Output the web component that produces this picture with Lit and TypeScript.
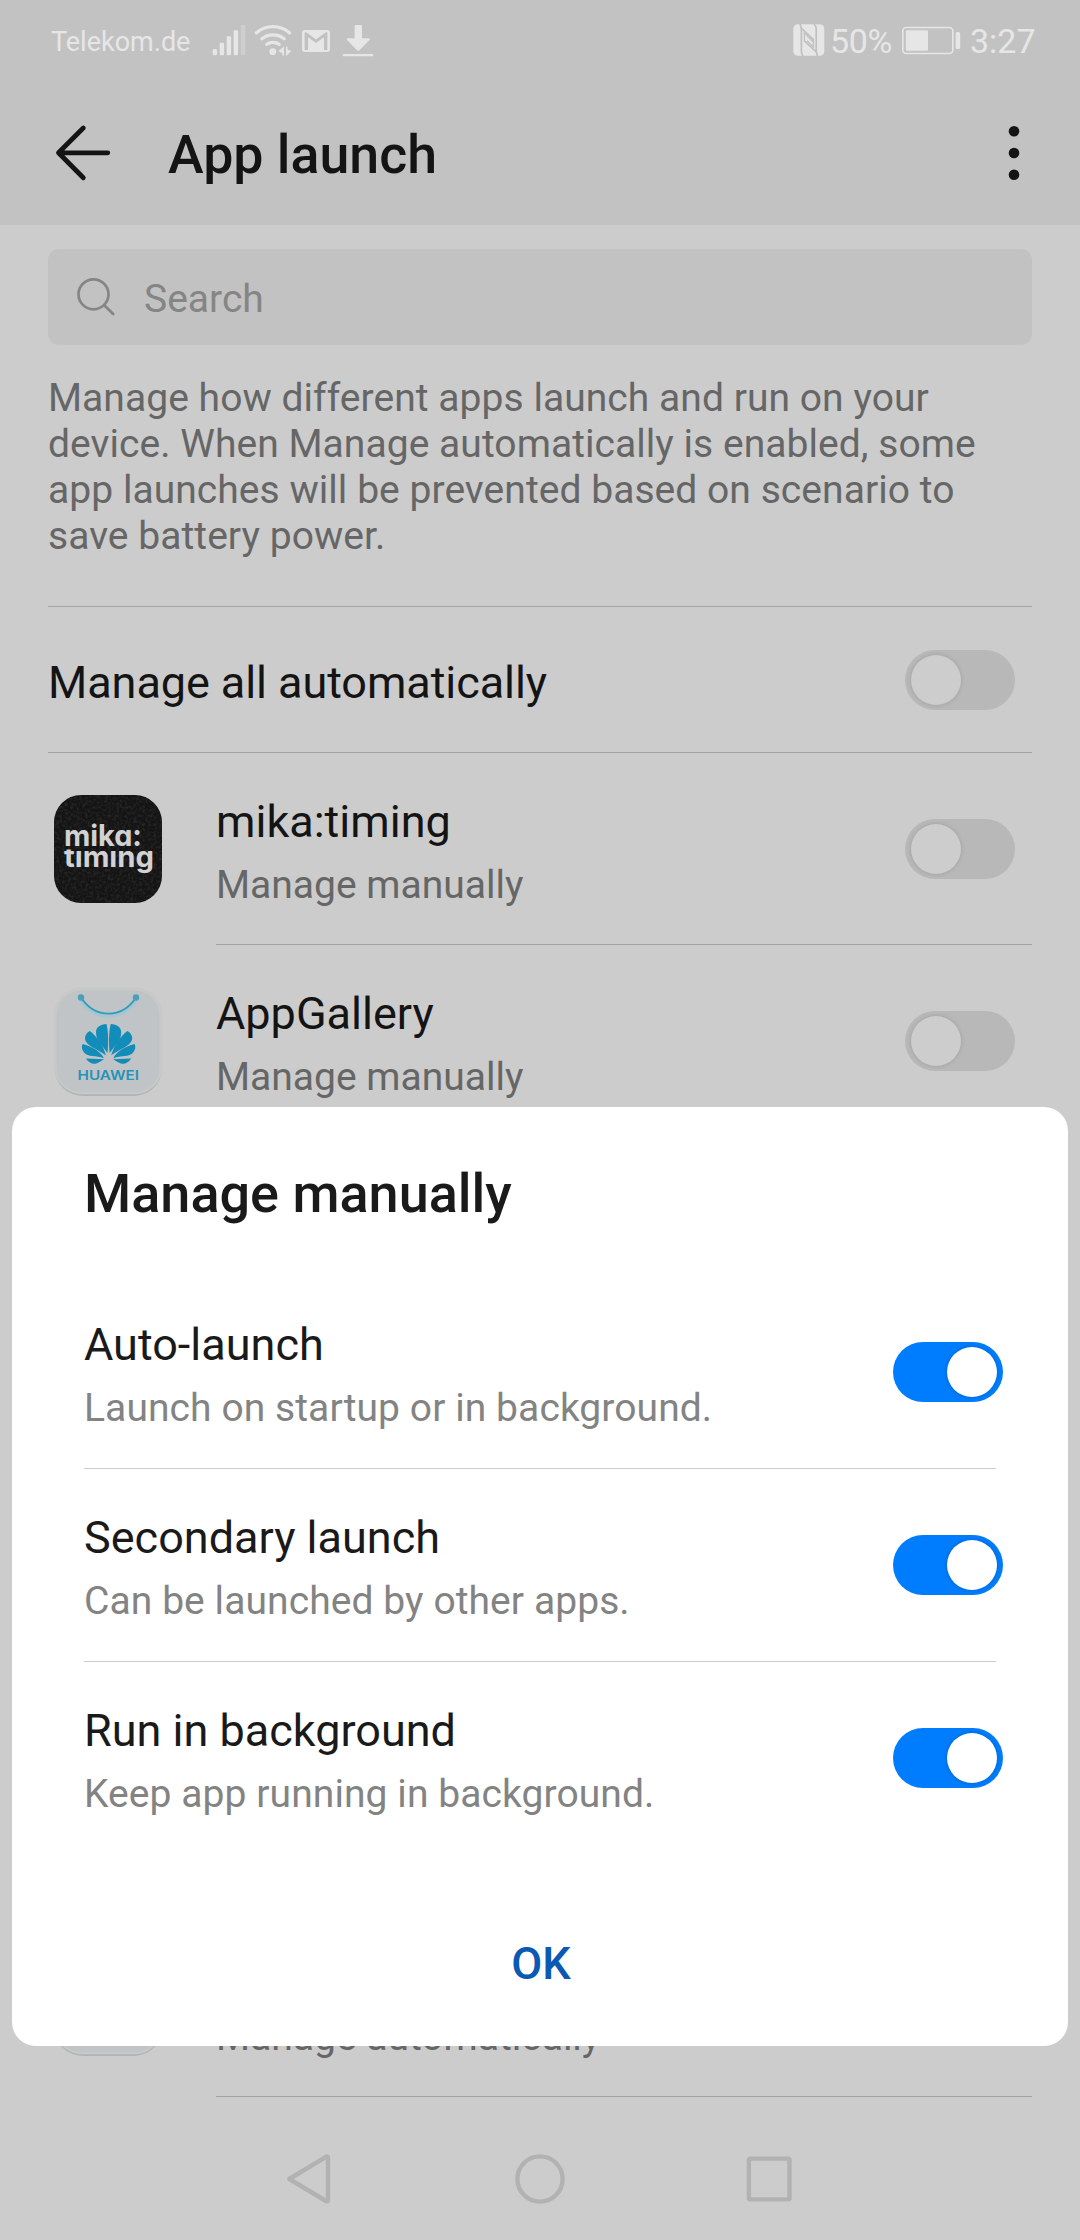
import { LitElement, html, css, svg } from "lit";
import { customElement, property } from "lit/decorators.js";

@customElement("toggle-switch")
class ToggleSwitch extends LitElement {
  @property({ type: Boolean, reflect: true }) on = false;

  static styles = css`
    :host {
      display: flex;
      flex: none;
      box-sizing: border-box;
      width: 110px;
      height: 60px;
      padding: 5px 6px;
      border-radius: 30px;
      background: #b8b8b8;
      overflow: hidden;
    }
    :host([on]) {
      justify-content: flex-end;
      background: #007dff;
    }
    .knob {
      width: 50px;
      height: 50px;
      border-radius: 50%;
      background: #cdcdcd;
      box-shadow: 0 0 4px rgba(0, 0, 0, 0.14);
    }
    :host([on]) .knob {
      background: #fff;
      box-shadow: 0 0 5px rgba(0, 0, 0, 0.22);
    }
  `;

  render() {
    return html`<div class="knob"></div>`;
  }
}

const mikaIcon = svg`
  <defs>
    <filter id="grain" x="0" y="0" width="100%" height="100%">
      <feTurbulence type="fractalNoise" baseFrequency="0.35" numOctaves="2" seed="4" />
      <feColorMatrix values="0 0 0 0 1  0 0 0 0 1  0 0 0 0 1  0.9 0 0 0 -0.36" />
      <feComposite in2="SourceGraphic" operator="in" />
    </filter>
    <clipPath id="xheight"><rect x="0" y="54.6" width="108" height="40" /></clipPath>
  </defs>
  <rect width="108" height="108" rx="27" fill="#141414" />
  <rect width="108" height="108" rx="27" fill="#fff" filter="url(#grain)" opacity="0.22" />
  <g class="mika">
    <text x="10" y="51.4" textLength="78" lengthAdjust="spacingAndGlyphs">mika:</text>
    <text x="10" y="71.7" textLength="90" lengthAdjust="spacingAndGlyphs" clip-path="url(#xheight)">timing</text>
  </g>`;

const petals = svg`
  <path d="M53.5 66C48 58 42 53 42 45.5C42 40 46 37.5 52.5 37C54.4 45 54.6 56 53.5 66Z" />
  <path d="M52 68.5C44 62 31.5 59 31 51.5C31 48 33 45.5 35.8 44C43.5 50 49 58 52 68.5Z" />
  <path d="M50 71.2C42 68 34 70.5 30 65.5C27.5 62 27.4 59.5 28.6 57C38 59.5 46 64 50 71.2Z" />
  <path d="M50 72.2L32 71.6C34.5 76 39.5 78 43 76.2C46 75 48 73.6 50 72.2Z" />`;

const plate = svg`
  <rect x="0.5" y="2" width="107.5" height="107" rx="28" fill="#b2b3b3" />
  <rect x="0" y="0" width="108.5" height="107.3" rx="28" fill="#c7c8c8" />
  <rect x="2.5" y="3.5" width="103" height="101.5" rx="25" fill="#c1c4c6" />`;

const galleryIcon = svg`
  ${plate}
  <path d="M27 11C41 32 68 32 82 11" fill="none" stroke="#8fc8d8" stroke-width="5" opacity="0.5" transform="translate(0 1.5)" />
  <path d="M27 10.5C41 32 68 32 82 10.5" fill="none" stroke="#2f9cbc" stroke-width="1.8" />
  <circle cx="27" cy="10.5" r="3.2" fill="#4aa0bb" />
  <circle cx="82" cy="10.5" r="3.2" fill="#4aa0bb" />
  <g fill="#128cb8">
    <g>${petals}</g>
    <g transform="translate(109.2 0) scale(-1 1)">${petals}</g>
  </g>
  <text class="huawei" x="23.5" y="93" textLength="61.5" lengthAdjust="spacingAndGlyphs">HUAWEI</text>`;

const apps = [
  { name: "mika:timing", mode: "Manage manually", icon: mikaIcon, last: false },
  { name: "AppGallery", mode: "Manage manually", icon: galleryIcon, last: false },
  { name: "", mode: "Manage automatically", icon: plate, last: true },
];

const options = [
  { name: "Auto-launch", note: "Launch on startup or in background." },
  { name: "Secondary launch", note: "Can be launched by other apps." },
  { name: "Run in background", note: "Keep app running in background." },
];

@customElement("app-root")
class AppRoot extends LitElement {
  static styles = css`
    :host {
      display: block;
      font-family: Roboto, "Liberation Sans", sans-serif;
      color: #141414;
    }
    .screen {
      position: relative;
      display: flex;
      flex-direction: column;
      width: 1080px;
      height: 2240px;
      background: #ccc;
      overflow: hidden;
    }
    svg {
      display: block;
      flex: none;
      overflow: visible;
    }
    .header {
      height: 225px;
      background: #c2c2c2;
    }
    .status {
      display: flex;
      align-items: center;
      height: 81px;
      padding: 0 40px 0 51px;
      color: #e6e6e6;
      white-space: nowrap;
      box-sizing: border-box;
    }
    .carrier {
      width: 161px;
      font-size: 27px;
      padding-top: 2px;
    }
    .percent {
      width: 71px;
      font-size: 34px;
      letter-spacing: -0.3px;
      margin-left: 5px;
      padding-top: 1px;
    }
    .clock {
      font-size: 34px;
      width: 70px;
      margin-left: 9px;
      padding-top: 1px;
    }
    .push {
      margin-left: auto;
    }
    .bar {
      display: flex;
      align-items: center;
      height: 144px;
      padding: 0 60px 0 54px;
    }
    .bar h1 {
      flex: 1;
      margin: 4px 0 0 56px;
      font-size: 53.7px;
      line-height: 64px;
      font-weight: 500;
    }
    .search {
      display: flex;
      align-items: center;
      height: 96px;
      margin: 24px 48px 0;
      padding-left: 28px;
      border-radius: 11px;
      background: #c2c2c2;
      color: #858585;
      font-size: 39px;
      gap: 28px;
    }
    .search span {
      padding-top: 4px;
    }
    .intro {
      margin: 30px 48px 0;
      padding-bottom: 47px;
      border-bottom: 1px solid #a3a3a3;
      color: #666;
      font-size: 39px;
      line-height: 46px;
      letter-spacing: 0.05px;
    }
    .all {
      display: flex;
      align-items: center;
      justify-content: space-between;
      height: 145px;
      margin: 0 48px;
      padding-right: 17px;
      border-bottom: 1px solid #a3a3a3;
    }
    .all .name {
      padding-top: 5px;
      letter-spacing: -0.08px;
    }
    .name {
      font-size: 45px;
      line-height: 53px;
      height: 53px;
      white-space: nowrap;
    }
    .note {
      margin-top: 14px;
      font-size: 39px;
      line-height: 46px;
      color: #666;
      white-space: nowrap;
    }
    .app {
      display: flex;
      align-items: center;
      height: 192px;
      padding: 0 48px 0 54px;
      gap: 54px;
    }
    .app.last {
      margin-top: 768px;
    }
    .line {
      display: flex;
      flex: 1;
      align-items: center;
      justify-content: space-between;
      box-sizing: border-box;
      height: 192px;
      padding-right: 17px;
      border-bottom: 1px solid #a3a3a3;
    }
    .text {
      padding-top: 5px;
    }
    .mika {
      fill: #d2d2d2;
      font: 700 29.5px Inter, "Open Sans", sans-serif;
      font-feature-settings: "cv11", "ss03";
    }
    .huawei {
      fill: #2693b8;
      font: 600 12.6px Inter, Roboto, sans-serif;
    }
    .nav {
      display: flex;
      align-items: center;
      justify-content: center;
      gap: 171px;
      height: 122px;
      margin-top: auto;
    }
    .sheet {
      position: absolute;
      left: 12px;
      top: 1107px;
      width: 1056px;
      height: 939px;
      box-sizing: border-box;
      padding: 55px 72px 0;
      border-radius: 24px;
      background: #fff;
      color: #1a1a1a;
    }
    .sheet h2 {
      margin: 0 0 50px;
      font-size: 54px;
      line-height: 64px;
      font-weight: 500;
    }
    .option {
      display: flex;
      align-items: center;
      justify-content: space-between;
      height: 192px;
      border-bottom: 1px solid #ccc;
    }
    .option:last-of-type {
      border-color: transparent;
    }
    .option .note {
      color: #838383;
      letter-spacing: 0.08px;
    }
    .option toggle-switch {
      margin-right: -7px;
    }
    .ok {
      display: block;
      margin: 82px auto 0;
      padding: 0 0 0 2px;
      border: 0;
      background: none;
      color: #0a59b3;
      font: 500 45px/53px Roboto, "Liberation Sans", sans-serif;
    }
  `;

  render() {
    return html`
      <div class="screen">
        <div class="header">
          <div class="status">
            <span class="carrier">Telekom.de</span>
            <svg width="162" height="81" viewBox="212 0 162 81" fill="#e6e6e6">
              <rect x="212.7" y="49" width="4.4" height="6.3" rx="1.5" />
              <rect x="219.7" y="42.7" width="4.4" height="12.6" rx="1" />
              <rect x="226.7" y="36.3" width="4.4" height="19" rx="1" />
              <rect x="233.7" y="30.3" width="4.4" height="25" rx="1" />
              <rect x="240.8" y="25" width="4.6" height="30.3" rx="1" fill="#cecece" />
              <g fill="none" stroke="#e6e6e6" stroke-width="3.2" stroke-linecap="round">
                <path d="M256.3 33C265.5 24.5 280.5 24.5 289.7 33" />
                <path d="M261.8 38.8C268 33.5 278 33.5 284.2 38.8" />
                <path d="M266.8 44.4C270 41.6 276 41.6 279.2 44.4" />
              </g>
              <circle cx="272.8" cy="51.7" r="3.4" />
              <path d="M284 46.5V56L282.3 55V53L278.3 51.2Z" />
              <path d="M286 46.5L287.5 47V49.5L291.3 51L286 56.3Z" />
              <path fill-rule="evenodd" d="M305 30H327Q330 30 330 33V49Q330 52 327 52H305Q302 52 302 49V33Q302 30 305 30ZM305.6 31.8L316 39.6L326.4 31.8L327.4 33V50H323.8V37.6L316 43.2L308.2 37.6V50H304.6V33Z" />
              <path d="M308.2 37.6L316 43.2L323.8 37.6V50H308.2Z" />
              <path d="M356 25H360.6Q362 25 362 26.4V38.3H368.6Q371 38.3 369.3 40.2L359.8 50Q358.3 51.4 356.8 50L347.3 40.2Q345.6 38.3 348 38.3H354.6V26.4Q354.6 25 356 25Z" />
              <rect x="342.7" y="54" width="30.6" height="2.3" rx="1" />
            </svg>
            <svg class="push" width="32" height="81" viewBox="793 0 32 81">
              <rect x="793.3" y="24.3" width="31" height="31.4" rx="4.5" fill="#e6e6e6" />
              <g fill="none" stroke="#c0c0c0" stroke-width="1.7">
                <path d="M800.2 24L801.4 29V51Q801.4 54 803 56.2M801.2 28L813.5 39.6" />
                <path d="M814.2 24Q816.2 26 816.2 29V51L817.4 56.2M816.2 52L804.2 40.6" />
                <path d="M804.4 41V33L813.4 42M813.4 39V47.2L807 40.8" stroke-width="1.3" />
              </g>
            </svg>
            <span class="percent">50%</span>
            <svg width="60" height="81" viewBox="901 0 60 81">
              <rect x="902.8" y="27.5" width="50" height="26" rx="3.5" fill="none" stroke="#e6e6e6" stroke-width="1.6" />
              <rect x="905.8" y="30.2" width="22.2" height="20.6" rx="1" fill="#e6e6e6" />
              <rect x="955.6" y="32" width="4.6" height="17" rx="1.6" fill="#e6e6e6" />
            </svg>
            <span class="clock">3:27</span>
          </div>
          <div class="bar">
            <svg width="58" height="60" viewBox="54 123 58 60" fill="none" stroke="#141414" stroke-width="4.8" stroke-linecap="round" stroke-linejoin="round">
              <path d="M83.3 128L58.5 152.8L83.3 177.8M58.5 152.8H107.8" />
            </svg>
            <h1>App launch</h1>
            <svg width="12" height="60" viewBox="1008 123 12 60" fill="#141414">
              <circle cx="1014" cy="131.3" r="5.3" />
              <circle cx="1014" cy="153" r="5.3" />
              <circle cx="1014" cy="174.7" r="5.3" />
            </svg>
          </div>
        </div>

        <div class="search">
          <svg width="40" height="40" viewBox="76 277 40 40" fill="none" stroke="#858585" stroke-width="2.7" stroke-linecap="round">
            <circle cx="93.5" cy="294.3" r="15" />
            <path d="M104.5 305.5L113.2 314" />
          </svg>
          <span>Search</span>
        </div>

        <div class="intro">
          Manage how different apps launch and run on your<br />device. When
          Manage automatically is enabled, some<br />app launches will be
          prevented based on scenario to<br />save battery power.
        </div>

        <div class="all">
          <div class="name">Manage all automatically</div>
          <toggle-switch></toggle-switch>
        </div>

        ${apps.map(
          (a) => html`
            <div class="app ${a.last ? "last" : ""}">
              <svg width="108" height="108" viewBox="0 0 108 108">${a.icon}</svg>
              <div class="line">
                <div class="text">
                  <div class="name">${a.name}</div>
                  <div class="note">${a.mode}</div>
                </div>
                <toggle-switch></toggle-switch>
              </div>
            </div>
          `
        )}

        <div class="nav">
          <svg width="60" height="60" viewBox="279 2149 60 60" fill="none" stroke="#b2b2b2" stroke-width="4.4" stroke-linejoin="round">
            <path d="M289.3 2179L326 2156.8Q328 2156 328 2158V2200Q328 2202 326 2201Z" />
          </svg>
          <svg width="60" height="60" viewBox="510 2149 60 60" fill="none" stroke="#b2b2b2" stroke-width="4.4">
            <circle cx="540" cy="2179" r="22.6" />
          </svg>
          <svg width="60" height="60" viewBox="741 2149 60 60" fill="none" stroke="#b2b2b2" stroke-width="4.4">
            <rect x="748.9" y="2158.6" width="40.6" height="40.8" rx="1.5" />
          </svg>
        </div>

        <div class="sheet">
          <h2>Manage manually</h2>
          ${options.map(
            (o) => html`
              <div class="option">
                <div class="text">
                  <div class="name">${o.name}</div>
                  <div class="note">${o.note}</div>
                </div>
                <toggle-switch on></toggle-switch>
              </div>
            `
          )}
          <button class="ok">OK</button>
        </div>
      </div>
    `;
  }
}
